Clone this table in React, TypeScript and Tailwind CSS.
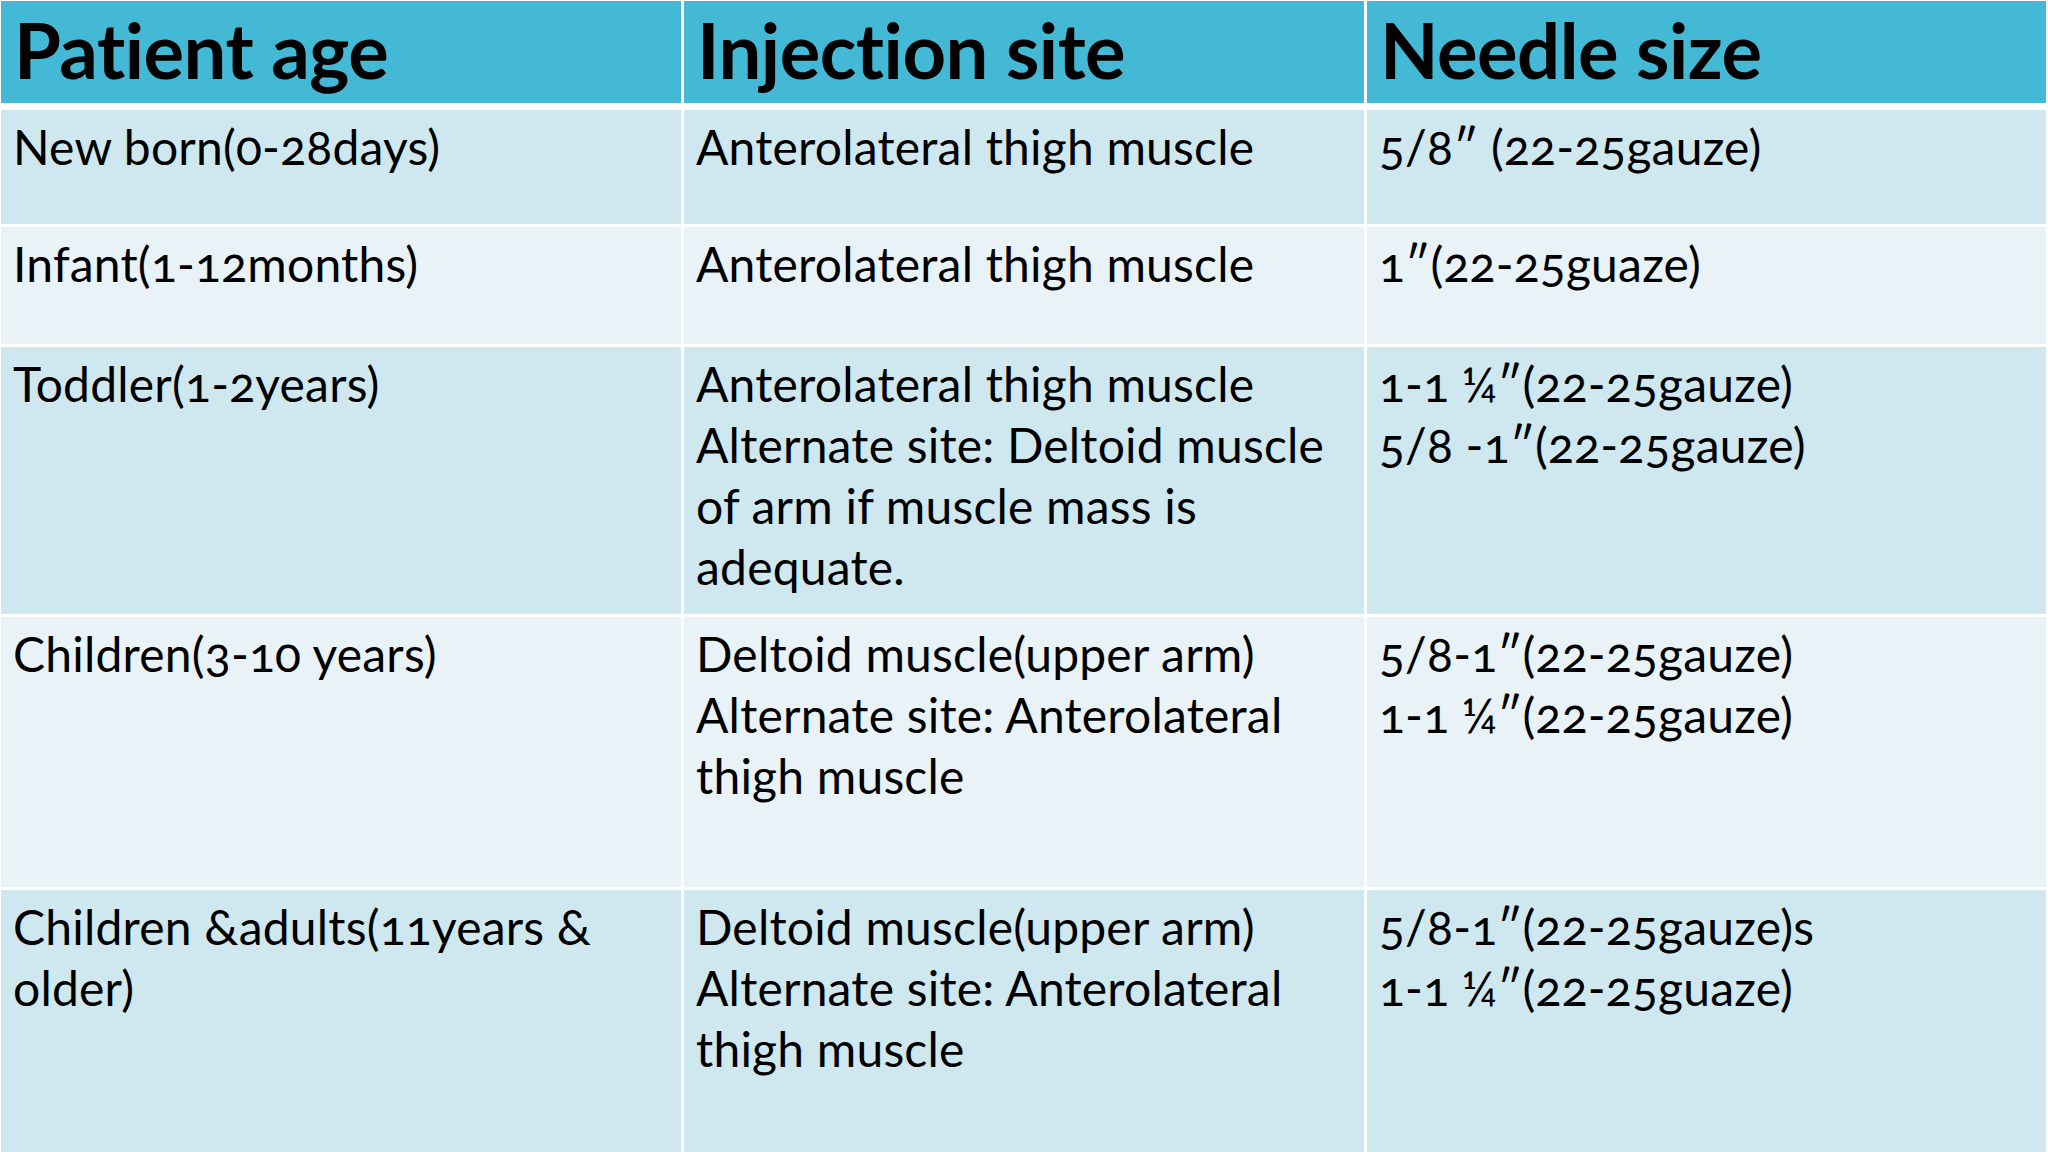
import React from "react";

const rows: { h: string; bg: string; cells: string[][] }[] = [
  {
    h: "h-[114px]",
    bg: "bg-[#cfe7ef]",
    cells: [["New born(0-28days)"], ["Anterolateral thigh muscle"], ["5/8″ (22-25gauze)"]],
  },
  {
    h: "h-[117px]",
    bg: "bg-[#e8f2f7]",
    cells: [["Infant(1-12months)"], ["Anterolateral thigh muscle"], ["1″(22-25guaze)"]],
  },
  {
    h: "h-[267px]",
    bg: "bg-[#cfe7ef]",
    cells: [
      ["Toddler(1-2years)"],
      ["Anterolateral thigh muscle", "Alternate site: Deltoid muscle", "of arm if muscle mass is", "adequate."],
      ["1-1 ¼″(22-25gauze)", "5/8 -1″(22-25gauze)"],
    ],
  },
  {
    h: "h-[270px]",
    bg: "bg-[#e8f2f7]",
    cells: [
      ["Children(3-10 years)"],
      ["Deltoid muscle(upper arm)", "Alternate site: Anterolateral", "thigh muscle"],
      ["5/8-1″(22-25gauze)", "1-1 ¼″(22-25gauze)"],
    ],
  },
  {
    h: "h-[270px]",
    bg: "bg-[#cfe7ef]",
    cells: [
      ["Children &adults(11years &", "older)"],
      ["Deltoid muscle(upper arm)", "Alternate site: Anterolateral", "thigh muscle"],
      ["5/8-1″(22-25gauze)s", "1-1 ¼″(22-25guaze)"],
    ],
  },
];

export default function App() {
  return (
    <div
      className="w-[2048px] h-[1152px] overflow-hidden bg-white pt-[1px] pl-[1px] text-black"
      style={{ fontFamily: "Lato, 'Open Sans', sans-serif" }}
    >
      <div className="w-[2045px] flex flex-col">
        <div className="grid grid-cols-[680px_680px_679px] gap-x-[3px] h-[102px]">
          {["Patient age", "Injection site", "Needle size"].map((t) => (
            <div key={t} className="bg-[#43b9d5] pl-[13px] pt-[9px] text-[76px] font-bold leading-[80px] tracking-[-0.5px]">
              {t}
            </div>
          ))}
        </div>
        <div className="flex flex-col gap-y-[3px] mt-[7px]">
          {rows.map((r, i) => (
            <div key={i} className={`grid grid-cols-[680px_680px_679px] gap-x-[3px] ${r.h}`}>
              {r.cells.map((c, j) => (
                <div key={j} className={`${r.bg} pl-[12px] pt-[6px] text-[48px] leading-[61px] tracking-[0.2px] oldstyle-nums`}>
                  {c.map((l, k) => (
                    <div key={k} className="whitespace-nowrap">
                      {l}
                    </div>
                  ))}
                </div>
              ))}
            </div>
          ))}
        </div>
      </div>
    </div>
  );
}
